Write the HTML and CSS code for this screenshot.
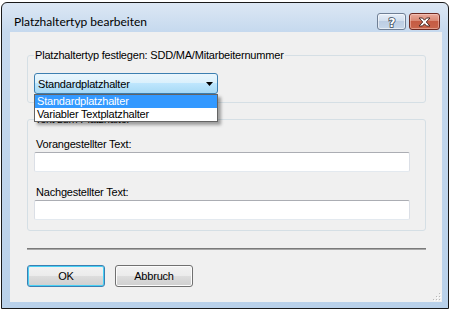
FILE: index.html
```html
<!DOCTYPE html>
<html lang="de">
<head>
  <meta charset="UTF-8">
  <title>Platzhaltertyp bearbeiten</title>
  <link rel="stylesheet" href="styles.css">
</head>
<body>
<div class="window">
  <div class="titlebar">
    <span class="title">Platzhaltertyp bearbeiten</span>
    <div class="caption-buttons">
      <button class="cap help">
        <svg width="12" height="12" viewBox="0 0 12 12">
          <text x="6" y="10.5" text-anchor="middle" class="help-glyph">?</text>
        </svg>
      </button>
      <button class="cap close">
        <svg width="13" height="10" viewBox="0 0 13 10">
          <path d="M1 1 H4.5 L6.5 3.2 L8.5 1 H12 L8.3 5 L12 9 H8.5 L6.5 6.8 L4.5 9 H1 L4.7 5 Z" fill="#fff" stroke="#4a2a26" stroke-width="1" stroke-linejoin="round"/>
        </svg>
      </button>
    </div>
  </div>

  <div class="client">
    <fieldset class="group group-type">
      <legend>Platzhaltertyp festlegen: SDD/MA/Mitarbeiternummer</legend>
      <div class="combo-wrap">
        <div class="combo">
          <span>Standardplatzhalter</span>
          <svg width="7" height="4" viewBox="0 0 7 4"><path d="M0 0 H7 L3.5 4 Z" fill="#000"/></svg>
        </div>
        <ul class="combo-list">
          <li class="selected">Standardplatzhalter</li>
          <li>Variabler Textplatzhalter</li>
        </ul>
      </div>
    </fieldset>

    <fieldset class="group group-text">
      <legend>Text zum Platzhalter</legend>
      <label class="field-label">Vorangestellter Text:</label>
      <div class="textbox"></div>
      <label class="field-label second">Nachgestellter Text:</label>
      <div class="textbox"></div>
    </fieldset>

    <div class="separator"></div>

    <div class="buttons">
      <button class="btn default">OK</button>
      <button class="btn">Abbruch</button>
    </div>

    <svg class="grip" width="9" height="9" viewBox="0 0 9 9">
      <rect x="7" y="1" width="1" height="1" fill="#b8b8b8"/>
      <rect x="4" y="4" width="1" height="1" fill="#b8b8b8"/>
      <rect x="7" y="4" width="1" height="1" fill="#b8b8b8"/>
      <rect x="1" y="7" width="1" height="1" fill="#b8b8b8"/>
      <rect x="4" y="7" width="1" height="1" fill="#b8b8b8"/>
      <rect x="7" y="7" width="1" height="1" fill="#b8b8b8"/>
      <rect x="8" y="2" width="1" height="1" fill="#fff"/>
      <rect x="5" y="5" width="1" height="1" fill="#fff"/>
      <rect x="8" y="5" width="1" height="1" fill="#fff"/>
      <rect x="2" y="8" width="1" height="1" fill="#fff"/>
      <rect x="5" y="8" width="1" height="1" fill="#fff"/>
      <rect x="8" y="8" width="1" height="1" fill="#fff"/>
    </svg>
  </div>
</div>
</body>
</html>
```

FILE: styles.css
```css
body {
  margin: 0;
  background: #fff;
  font-family: "Liberation Sans", Arial, sans-serif;
  font-size: 11px;
  letter-spacing: -0.2px;
  color: #000;
}
.window {
  margin: 2px 0 0 1px;
  width: 448px;
  height: 307px;
  box-sizing: border-box;
  border: 1px solid #1a1a1a;
  border-radius: 6px 6px 0 0;
  background: linear-gradient(#dce7f4 0, #c6d9ee 28px, #b9d1ea 100%);
  display: flex;
  flex-direction: column;
}
.titlebar {
  height: 29px;
  box-sizing: border-box;
  padding: 10px 8px 0 12px;
  display: flex;
  align-items: flex-start;
  justify-content: space-between;
}
.title {
  font-family: Lato, "Noto Sans", sans-serif;
  font-size: 12px;
  letter-spacing: 0;
  line-height: 16px;
  margin-top: 1px;
  color: #000;
}
.caption-buttons {
  display: flex;
  gap: 3px;
}
.cap {
  height: 17px;
  padding: 0;
  border-radius: 3px;
  display: flex;
  align-items: center;
  justify-content: center;
}
.help {
  width: 29px;
  border: 1px solid #6f7f95;
  background: linear-gradient(#e6eef8 0%, #d2dfee 45%, #bccde3 50%, #c6d7ea 100%);
  box-shadow: inset 0 0 0 1px rgba(255,255,255,0.55);
}
.help-glyph {
  font-family: "DejaVu Sans", sans-serif;
  font-size: 12px;
  font-weight: bold;
  fill: #fff;
  stroke: #3d4a5c;
  stroke-width: 1.6px;
  paint-order: stroke;
}
.close {
  width: 31px;
  border: 1px solid #6e2a22;
  background: linear-gradient(#eaa99b 0%, #d98873 45%, #c55b43 50%, #c9654b 100%);
  box-shadow: inset 0 0 0 1px rgba(255,220,210,0.45);
}
.client {
  position: relative;
  flex: 1;
  margin: 0 6px 6px 8px;
  background: #f0f0f0;
  padding: 17px 16px 0 17px;
}
.group {
  margin: 0;
  min-width: 0;
  border: 1px solid #d5dfe5;
  border-radius: 3px;
}
.group legend {
  padding: 0 1px;
  line-height: 13px;
}
.group-type {
  padding: 0 15px 8px 6px;
}
.combo-wrap {
  position: relative;
  width: 184px;
  margin-top: 11px;
}
.combo {
  height: 21px;
  box-sizing: border-box;
  border: 1px solid #3c7fb1;
  border-radius: 3px;
  background: linear-gradient(#eaf6fd 0%, #d9f0fc 50%, #bee6fd 50%, #a7d9f5 100%);
  display: flex;
  align-items: center;
  justify-content: space-between;
  padding: 0 4px 0 3px;
}
.combo-list {
  position: absolute;
  top: 21px;
  left: 0;
  width: 184px;
  box-sizing: border-box;
  margin: 0;
  padding: 0;
  list-style: none;
  background: #fff;
  border: 1px solid #646464;
  box-shadow: 3px 3px 3px rgba(0,0,0,0.35);
  z-index: 2;
}
.combo-list li {
  height: 13px;
  line-height: 13px;
  padding-left: 2px;
}
.combo-list li.selected {
  background: #3399ff;
  color: #fff;
}
.group-text {
  margin-top: 10px;
  padding: 0 15px 10px 6px;
}
.field-label {
  display: block;
  line-height: 13px;
  margin: 12px 0 1px 2px;
}
.field-label.second {
  margin-top: 14px;
}
.textbox {
  height: 20px;
  box-sizing: border-box;
  background: #fff;
  border: 1px solid #dbdfe6;
  border-top-color: #abadb3;
  border-bottom-color: #e3e9ef;
  border-radius: 2px;
}
.separator {
  margin-top: 17px;
  height: 1px;
  background: #7a7a7a;
  border-bottom: 1px solid #a8a8a8;
}
.buttons {
  display: flex;
  gap: 10px;
  margin-top: 15px;
}
.btn {
  width: 78px;
  height: 22px;
  padding: 0;
  font-family: "Liberation Sans", Arial, sans-serif;
  font-size: 11px;
  letter-spacing: -0.2px;
  color: #000;
  border: 1px solid #707070;
  border-radius: 3px;
  background: linear-gradient(#f2f2f2 0%, #ebebeb 50%, #dddddd 50%, #cfcfcf 100%);
  box-shadow: inset 0 0 0 1px #fcfcfc;
}
.btn.default {
  border-color: #3c7fb1;
  box-shadow: inset 0 0 0 1px #48d0f5;
}
.grip {
  position: absolute;
  right: 1px;
  bottom: 1px;
}
```
